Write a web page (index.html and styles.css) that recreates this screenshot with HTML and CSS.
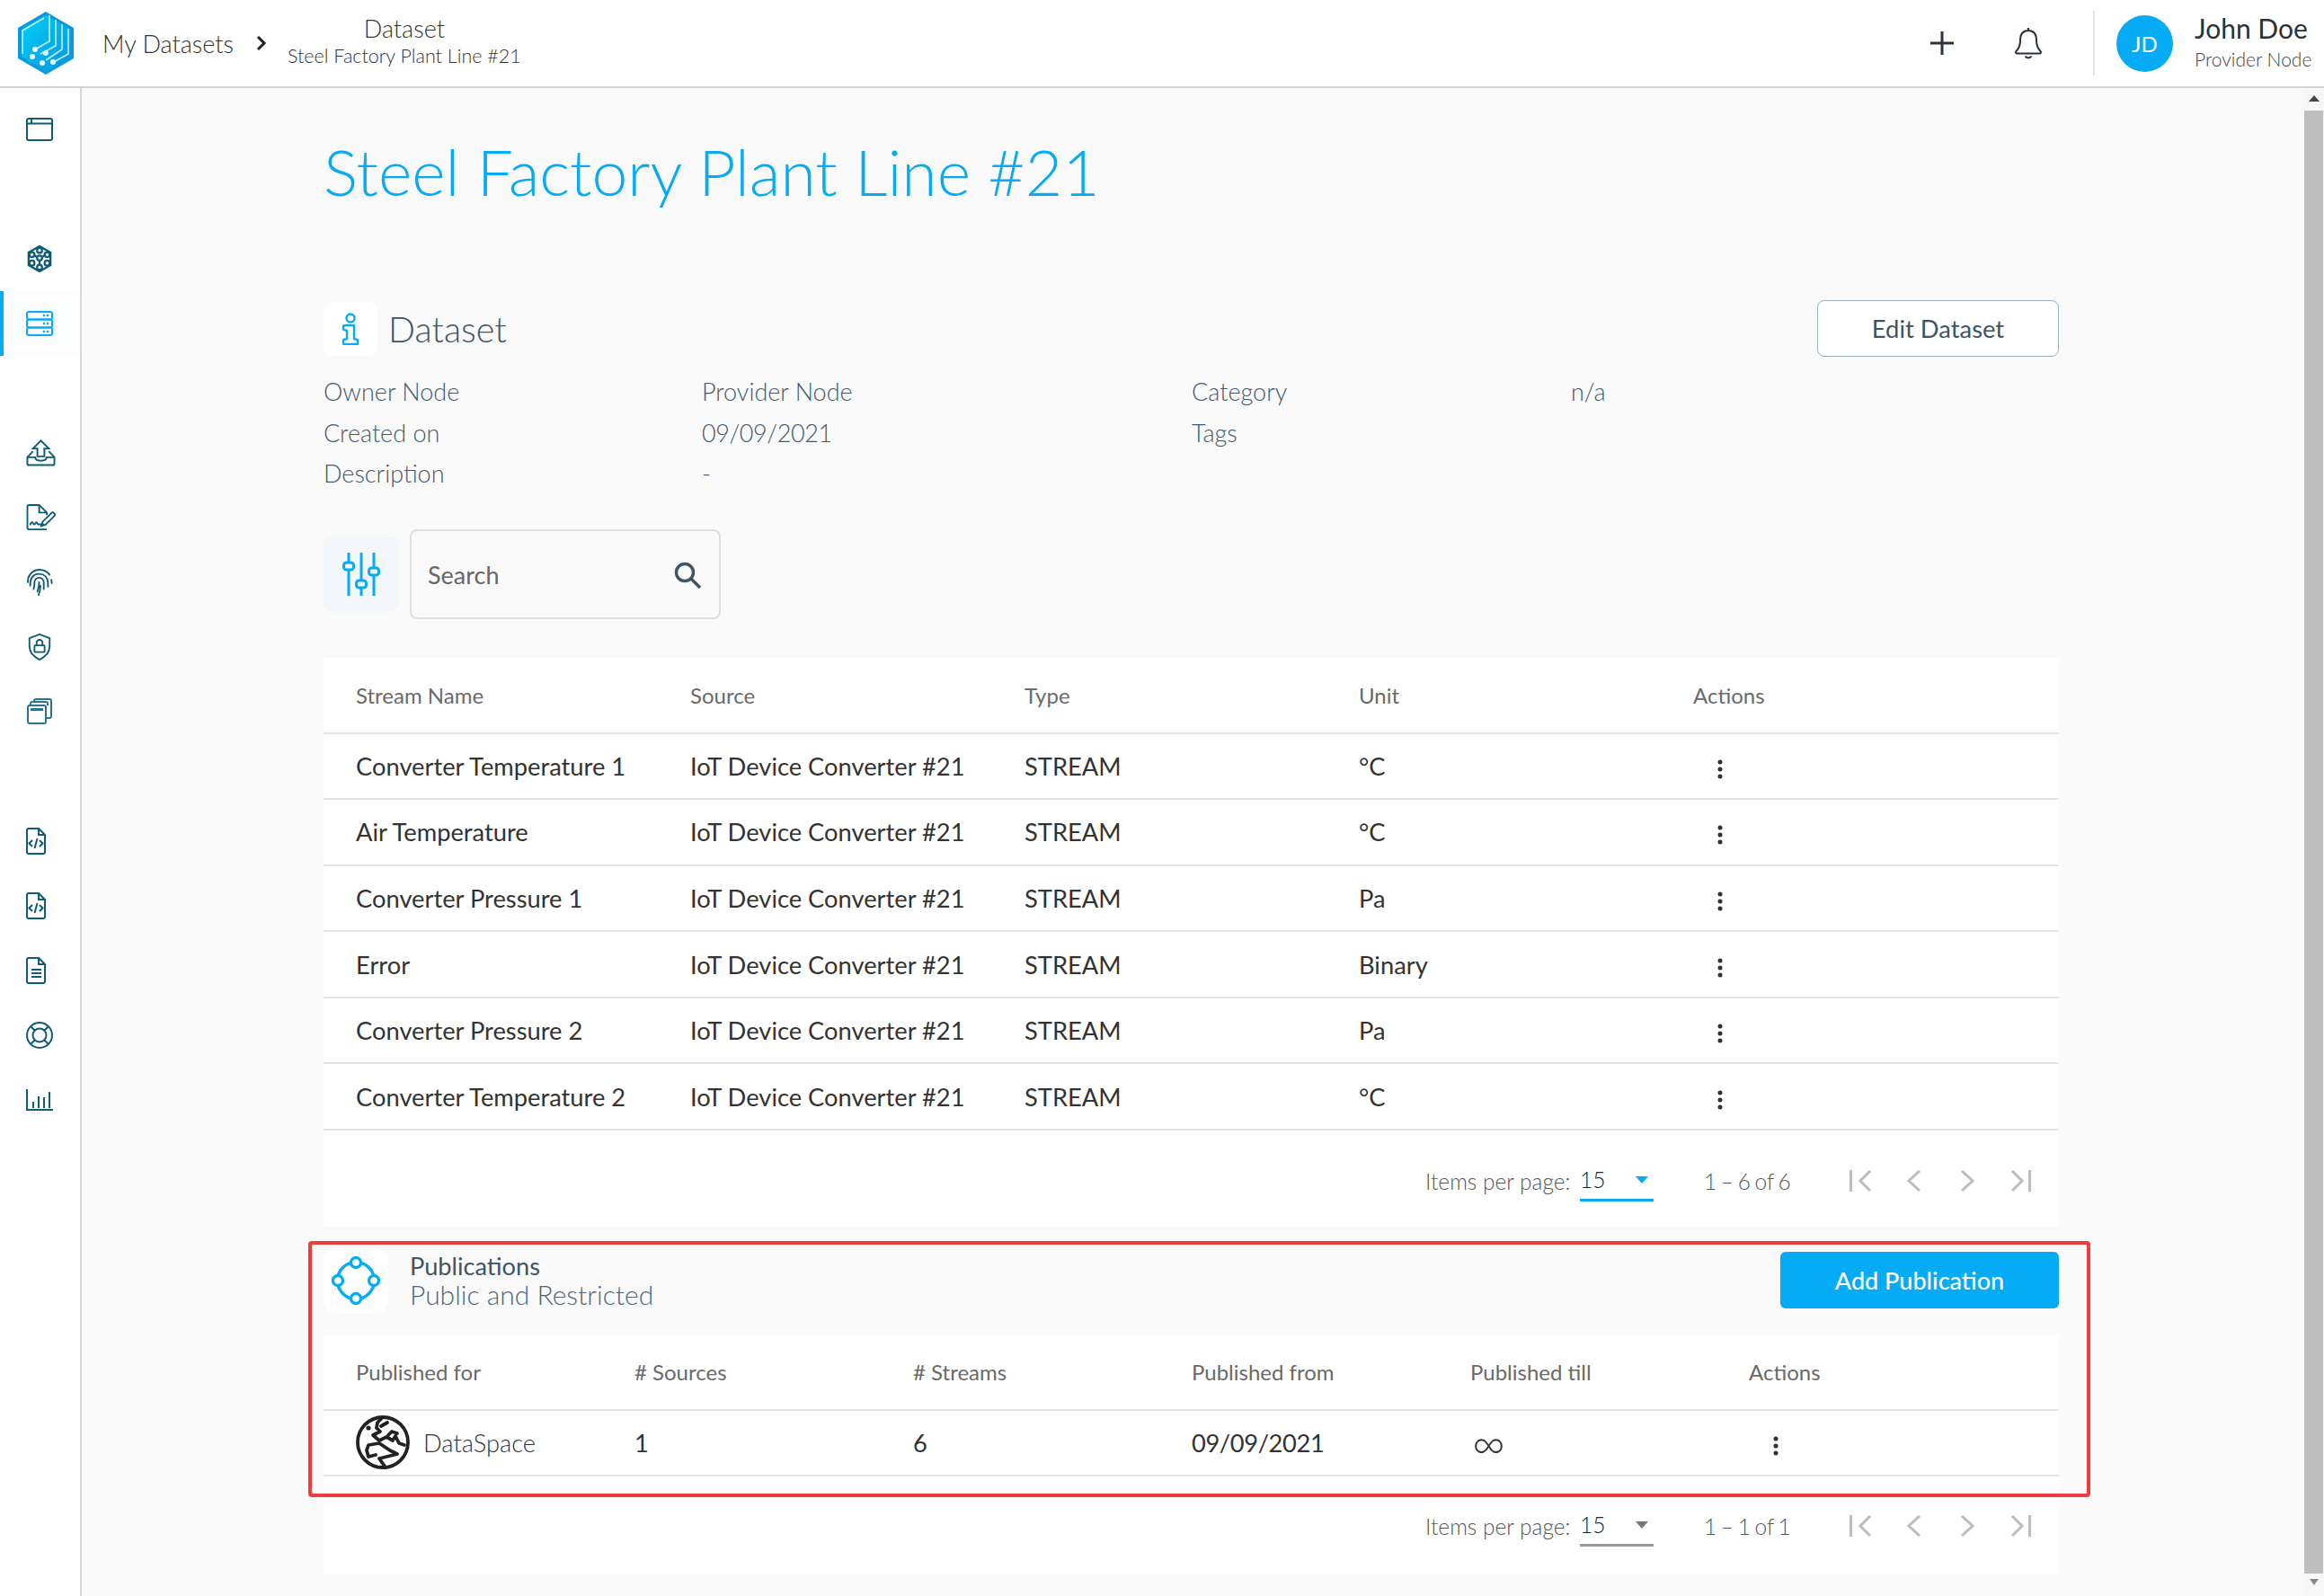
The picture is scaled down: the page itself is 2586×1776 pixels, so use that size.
FILE: index.html
```html
<!DOCTYPE html>
<html lang="en">
<head>
  <meta charset="UTF-8">
  <title>Steel Factory Plant Line #21</title>
  <link rel="stylesheet" href="styles.css">
</head>
<body>

  <header class="topbar">
    <svg class="logo" viewBox="0 0 62 70">
      <defs>
        <linearGradient id="logoFill" x1="0" y1="0" x2="1" y2="1">
          <stop offset="0" stop-color="#00d0f8"/>
          <stop offset="1" stop-color="#0a94dc"/>
        </linearGradient>
      </defs>
      <polygon points="31,0 62,18 62,52 31,70 0,52 0,18" fill="#0a9bdf"/>
      <polygon points="31,4 58,20 58,50 31,66 4,50 4,20" fill="url(#logoFill)"/>
      <g fill="none" stroke="#bdf0fb" stroke-width="1.6">
        <path d="M5 47V21L29 7"/>
        <path d="M35 4V33L19 42"/>
        <path d="M42 9V38L25 47"/>
        <path d="M49 14V42L31 54"/>
        <path d="M56 19V47L38 57"/>
      </g>
      <g fill="#e8fbff">
        <circle cx="19" cy="42" r="3"/><circle cx="31" cy="46" r="3"/>
        <circle cx="16" cy="50" r="3"/><circle cx="27" cy="57" r="3"/><circle cx="39" cy="56" r="3"/>
      </g>
    </svg>
    <span class="crumb">My Datasets</span>
    <svg class="crumb-arrow" viewBox="0 0 12 18"><path d="M2 2l7 7-7 7" fill="none" stroke="#222" stroke-width="3"/></svg>
    <div class="crumb-current">
      <div class="crumb-title">Dataset</div>
      <div class="crumb-sub">Steel Factory Plant Line #21</div>
    </div>
    <div class="topbar-right">
      <svg class="plus-icon" viewBox="0 0 28 28"><path d="M14 1v26M1 14h26" fill="none" stroke="#2b3138" stroke-width="3"/></svg>
      <svg class="bell-icon" viewBox="0 0 32 38">
        <path d="M16 2v3M16 5c-6.500 0-9 5-9 11 0 6-1.500 9-4.500 12-1 1-.5 2.500 1 2.500h25c1.500 0 2-1.500 1-2.500-3-3-4.500-6-4.500-12 0-6-2.500-11-9-11zM12.500 33.500c1.500 2.500 5.500 2.500 7 0" fill="none" stroke="#2b3138" stroke-width="2"/>
      </svg>
      <div class="topbar-sep"></div>
      <div class="avatar">JD</div>
      <div class="user">
        <div class="user-name">John Doe</div>
        <div class="user-role">Provider Node</div>
      </div>
    </div>
  </header>

  <div class="main">
    <nav class="sidebar">
      <a class="nav-item">
        <svg class="nav-icon" viewBox="0 0 30 26"><g fill="none" stroke="currentColor" stroke-width="2"><rect x="1" y="1" width="28" height="24" rx="2"/><path d="M1 6.500h28M6 1v5.500"/></g></svg>
      </a>
      <div class="nav-gap"></div>
      <a class="nav-item">
        <svg class="nav-icon" viewBox="0 0 30 32"><g fill="none" stroke="currentColor" stroke-width="2.400"><path d="M15 1l13 7.500v15L15 31 2 23.500v-15z"/><circle cx="15" cy="6" r="3"/><circle cx="6" cy="11" r="3"/><circle cx="24" cy="11" r="3"/><circle cx="6" cy="21" r="3"/><circle cx="24" cy="21" r="3"/><circle cx="15" cy="26" r="3"/><circle cx="15" cy="15" r="3"/><path d="M15 18v5M9 12l3 2M21 12l-3 2"/></g></svg>
      </a>
      <a class="nav-item active">
        <svg class="nav-icon" viewBox="0 0 30 28"><g fill="none" stroke="currentColor" stroke-width="2"><rect x="1" y="1" width="28" height="8.500" rx="2"/><rect x="1" y="9.500" width="28" height="9" rx="2"/><rect x="1" y="18.500" width="28" height="8.500" rx="2"/></g><g fill="currentColor"><circle cx="20" cy="5" r="1.300"/><circle cx="24" cy="5" r="1.300"/><circle cx="20" cy="14" r="1.300"/><circle cx="24" cy="14" r="1.300"/><circle cx="20" cy="23" r="1.300"/><circle cx="24" cy="23" r="1.300"/></g></svg>
      </a>
      <div class="nav-gap"></div>
      <a class="nav-item">
        <svg class="nav-icon wide" viewBox="0 0 34 30"><g fill="none" stroke="currentColor" stroke-width="2"><path d="M17 1L8 10h5v9h8v-9h5z"/><path d="M8 13l-6.500 7v7c0 1 1 2 2 2h27c1 0 2-1 2-2v-7L26 13M1.500 20h9c0 3 3 4 6.500 4s6.500-1 6.500-4h9"/></g></svg>
      </a>
      <a class="nav-item">
        <svg class="nav-icon wide" viewBox="0 0 34 32"><g fill="none" stroke="currentColor" stroke-width="2"><path d="M23 29v1H3a2 2 0 0 1-2-2V3a2 2 0 0 1 2-2h12l9 9v3M15 1v9h9"/><path d="M4 25c2-5 3-4 4-2s2 1 3-1 2 3 4 2h6"/><path d="M19 21l-1.500 5 5-1.500L33 14a2.500 2.500 0 0 0-3.500-3.500z"/></g></svg>
      </a>
      <a class="nav-item">
        <svg class="nav-icon" viewBox="0 0 32 32"><g fill="none" stroke="currentColor" stroke-width="2" stroke-linecap="round"><path d="M2 16C2 7 8 1 16 1c5 0 9 2 12 6M30 13c.500 1.500.500 3 .500 4"/><path d="M5 20c-.500-8 3-14 10.500-14 6 0 10 4 10.500 10v5"/><path d="M9 24c1-3 1-5 1-8 0-3 2.500-5.500 5.500-5.500S21 13 21 16v8"/><path d="M13.500 27c1-3 2-7 2-11M17 20c0 4-1 8-2 11"/></g></svg>
      </a>
      <a class="nav-item">
        <svg class="nav-icon" viewBox="0 0 28 32"><g fill="none" stroke="currentColor" stroke-width="2"><path d="M14 1l12 4.500V15c0 8-6 13-12 16C8 28 2 23 2 15V5.500z"/><rect x="8" y="14" width="12" height="8" rx="1"/><path d="M10.500 14v-3a3.500 3.500 0 0 1 7 0v3"/></g></svg>
      </a>
      <a class="nav-item">
        <svg class="nav-icon light" viewBox="0 0 28 30"><g fill="none" stroke="currentColor" stroke-width="2"><rect x="1" y="8" width="20" height="20" rx="2"/><path d="M4 12.500h14M4 12.500" stroke-width="3"/><path d="M4 8V6a2 2 0 0 1 2-2h15a2 2 0 0 1 2 2v2M8 4V3a2 2 0 0 1 2-2h15a2 2 0 0 1 2 2v17a2 2 0 0 1-2 2h-4"/></g></svg>
      </a>
      <div class="nav-gap"></div>
      <a class="nav-item">
        <svg class="nav-icon doc" viewBox="0 0 22 30"><g fill="none" stroke="currentColor" stroke-width="2"><path d="M14 1H3a2 2 0 0 0-2 2v24a2 2 0 0 0 2 2h16a2 2 0 0 0 2-2V8zM14 1v7h7"/><path d="M7 14l-3.500 3.500L7 21M15 14l3.500 3.500L15 21M12.500 12l-3 11"/></g></svg>
      </a>
      <a class="nav-item">
        <svg class="nav-icon doc" viewBox="0 0 22 30"><g fill="none" stroke="currentColor" stroke-width="2"><path d="M14 1H3a2 2 0 0 0-2 2v24a2 2 0 0 0 2 2h16a2 2 0 0 0 2-2V8zM14 1v7h7"/><path d="M7 14l-3.500 3.500L7 21M15 14l3.500 3.500L15 21M12.500 12l-3 11"/></g></svg>
      </a>
      <a class="nav-item">
        <svg class="nav-icon doc" viewBox="0 0 22 30"><g fill="none" stroke="currentColor" stroke-width="2"><path d="M14 1H3a2 2 0 0 0-2 2v24a2 2 0 0 0 2 2h16a2 2 0 0 0 2-2V8zM14 1v7h7"/><path d="M6 14h11M6 18h11M6 22h11"/></g></svg>
      </a>
      <a class="nav-item">
        <svg class="nav-icon" viewBox="0 0 30 30"><g fill="none" stroke="currentColor" stroke-width="2"><circle cx="15" cy="15" r="14"/><circle cx="15" cy="15" r="7.500"/><path d="M5 5l5 5M25 5l-5 5M5 25l5-5M25 25l-5-5"/></g></svg>
      </a>
      <a class="nav-item">
        <svg class="nav-icon" viewBox="0 0 30 24"><path d="M1 0v23h29M8 21v-7M14 21V8M20 21v-12M26 21V3" fill="none" stroke="currentColor" stroke-width="2"/></svg>
      </a>
    </nav>

    <div class="content">
      <h1 class="page-title">Steel Factory Plant Line #21</h1>

      <section class="section-head">
        <div class="icon-tile">
          <svg class="info-icon" viewBox="0 0 18 36"><g fill="none" stroke="#05abf5" stroke-width="2.400"><circle cx="9" cy="6" r="4.500"/><path d="M3 14h10v15c0 1 4 0 4 2v3c0 1-.500 1-1 1H2c-.500 0-1-.500-1-1v-3c0-2 4-1 4-2v-9c0-1-4 0-4-2v-2c0-1 1-2 2-2z"/></g></svg>
        </div>
        <h2 class="section-title">Dataset</h2>
        <button class="btn-outline">Edit Dataset</button>
      </section>

      <div class="info-grid">
        <div>Owner Node</div><div>Provider Node</div><div>Category</div><div>n/a</div>
        <div>Created on</div><div class="date">09/09/2021</div><div>Tags</div><div></div>
        <div>Description</div><div>-</div><div></div><div></div>
      </div>

      <div class="toolbar">
        <div class="filter-btn">
          <svg class="filter-icon" viewBox="0 0 42 48"><g fill="none" stroke="#05abf5" stroke-width="3"><path d="M7 0v11M7 19v29M21 0v31M21 39v9M35 0v17M35 25v23"/><rect x="1.500" y="11" width="11" height="8" rx="3"/><rect x="15.500" y="31" width="11" height="8" rx="3"/><rect x="29.500" y="17" width="11" height="8" rx="3"/></g></svg>
        </div>
        <div class="search-box">
          <span class="search-text">Search</span>
          <svg class="search-icon" viewBox="0 0 30 30"><g fill="none" stroke="#3d5567" stroke-width="3.400"><circle cx="12" cy="12" r="9.500"/><path d="M19 19l10 10"/></g></svg>
        </div>
      </div>

      <div class="card streams">
        <div class="row row-head">
          <div>Stream Name</div><div>Source</div><div>Type</div><div>Unit</div><div>Actions</div>
        </div>
        <div class="row">
          <div>Converter Temperature 1</div><div>IoT Device Converter #21</div><div>STREAM</div><div>°C</div>
          <div><svg class="kebab" viewBox="0 0 6 22"><circle cx="3" cy="3" r="2.500"/><circle cx="3" cy="11" r="2.500"/><circle cx="3" cy="19" r="2.500"/></svg></div>
        </div>
        <div class="row">
          <div>Air Temperature</div><div>IoT Device Converter #21</div><div>STREAM</div><div>°C</div>
          <div><svg class="kebab" viewBox="0 0 6 22"><circle cx="3" cy="3" r="2.500"/><circle cx="3" cy="11" r="2.500"/><circle cx="3" cy="19" r="2.500"/></svg></div>
        </div>
        <div class="row">
          <div>Converter Pressure 1</div><div>IoT Device Converter #21</div><div>STREAM</div><div>Pa</div>
          <div><svg class="kebab" viewBox="0 0 6 22"><circle cx="3" cy="3" r="2.500"/><circle cx="3" cy="11" r="2.500"/><circle cx="3" cy="19" r="2.500"/></svg></div>
        </div>
        <div class="row">
          <div>Error</div><div>IoT Device Converter #21</div><div>STREAM</div><div>Binary</div>
          <div><svg class="kebab" viewBox="0 0 6 22"><circle cx="3" cy="3" r="2.500"/><circle cx="3" cy="11" r="2.500"/><circle cx="3" cy="19" r="2.500"/></svg></div>
        </div>
        <div class="row">
          <div>Converter Pressure 2</div><div>IoT Device Converter #21</div><div>STREAM</div><div>Pa</div>
          <div><svg class="kebab" viewBox="0 0 6 22"><circle cx="3" cy="3" r="2.500"/><circle cx="3" cy="11" r="2.500"/><circle cx="3" cy="19" r="2.500"/></svg></div>
        </div>
        <div class="row">
          <div>Converter Temperature 2</div><div>IoT Device Converter #21</div><div>STREAM</div><div>°C</div>
          <div><svg class="kebab" viewBox="0 0 6 22"><circle cx="3" cy="3" r="2.500"/><circle cx="3" cy="11" r="2.500"/><circle cx="3" cy="19" r="2.500"/></svg></div>
        </div>
        <div class="paginator">
          <span class="pg-label">Items per page:</span>
          <div class="pg-select focus"><span>15</span><i class="caret"></i></div>
          <span class="pg-range">1 – 6 of 6</span>
          <svg class="pg-nav" viewBox="0 0 202 24"><g fill="none" stroke="#bdbdbd" stroke-width="3"><path d="M1.500 0v24M23 1L12 12l11 11M78 1L66 12l12 11M125 1l12 11-12 11M181 1l11 11-11 11M200.500 0v24"/></g></svg>
        </div>
      </div>

      <section class="pub-head">
        <div class="icon-tile pub-tile">
          <svg class="pub-icon" viewBox="0 0 54 54"><g fill="#fff" stroke="#05abf5" stroke-width="3.400"><circle cx="27" cy="27" r="20.500" fill="none"/><circle cx="27" cy="7" r="5.500"/><circle cx="47" cy="27" r="5.500"/><circle cx="27" cy="47" r="5.500"/><circle cx="7" cy="27" r="5.500"/></g></svg>
        </div>
        <div class="pub-text">
          <div class="pub-title">Publications</div>
          <div class="pub-sub">Public and Restricted</div>
        </div>
        <button class="btn-primary">Add Publication</button>
      </section>

      <div class="card pubs">
        <div class="row row-six row-head pub-row-head">
          <div>Published for</div><div># Sources</div><div># Streams</div><div>Published from</div><div>Published till</div><div>Actions</div>
        </div>
        <div class="row row-six">
          <div class="space-cell">
            <svg class="globe" viewBox="0 0 60 60"><g fill="none" stroke="#222" stroke-width="3.800" stroke-linejoin="round" stroke-linecap="round"><circle cx="30" cy="30" r="28"/><path d="M29 3L24 8l-1 6 4 4-8 4 7 6 8-4 7 4 3-5 4 8 6 2M35 8l-7 4M46 20l-6-2-4 4"/><path d="M12 39l2-6 12-2 12 8 8 4-12 3-8 2 7 10M12 39l2 7 8-2"/></g><circle cx="14" cy="14" r="2.600" fill="#222"/></svg>
            <span class="space-name">DataSpace</span>
          </div>
          <div>1</div><div>6</div><div class="date">09/09/2021</div><div class="infinity">∞</div>
          <div><svg class="kebab" viewBox="0 0 6 22"><circle cx="3" cy="3" r="2.500"/><circle cx="3" cy="11" r="2.500"/><circle cx="3" cy="19" r="2.500"/></svg></div>
        </div>
        <div class="paginator pub-pager">
          <span class="pg-label">Items per page:</span>
          <div class="pg-select"><span>15</span><i class="caret"></i></div>
          <span class="pg-range">1 – 1 of 1</span>
          <svg class="pg-nav" viewBox="0 0 202 24"><g fill="none" stroke="#bdbdbd" stroke-width="3"><path d="M1.500 0v24M23 1L12 12l11 11M78 1L66 12l12 11M125 1l12 11-12 11M181 1l11 11-11 11M200.500 0v24"/></g></svg>
        </div>
      </div>

      <div class="highlight"></div>
    </div>

    <div class="scrollbar">
      <i class="scroll-up"></i>
      <div class="scroll-thumb"></div>
      <i class="scroll-down"></i>
    </div>
  </div>

</body>
</html>
```

FILE: styles.css
```css
* {
  box-sizing: border-box;
}

body {
  margin: 0;
  height: 1776px;
  overflow: hidden;
  font-family: 'Lato', sans-serif;
  background: #fafafa;
  color: #2b3138;
}

/* top bar */
.topbar {
  display: flex;
  align-items: center;
  height: 98px;
  background: #ffffff;
  border-bottom: 2px solid #d4d4d4;
  padding-left: 20px;
}

.logo {
  width: 62px;
  height: 70px;
}

.crumb {
  margin-left: 32px;
  font-size: 27px;
  font-weight: 300;
  color: #333;
}

.crumb-arrow {
  width: 12px;
  height: 18px;
  margin-left: 25px;
}

.crumb-current {
  margin-left: 23px;
  text-align: center;
  font-weight: 300;
  color: #333;
}

.crumb-title {
  font-size: 27px;
  line-height: 30px;
  margin-top: -2px;
}

.crumb-sub {
  font-size: 21.500px;
  line-height: 30px;
}

.topbar-right {
  display: flex;
  align-items: center;
  margin-left: auto;
}

.plus-icon {
  width: 28px;
  height: 28px;
}

.bell-icon {
  width: 32px;
  height: 38px;
  margin-left: 66px;
}

.topbar-sep {
  width: 2px;
  height: 72px;
  background: #e2e2e2;
  margin-left: 56px;
}

.avatar {
  display: flex;
  align-items: center;
  justify-content: center;
  width: 63px;
  height: 63px;
  margin-left: 24px;
  border-radius: 50%;
  background: #05abf5;
  color: #fff;
  font-size: 24px;
}

.user {
  width: 144px;
  margin-left: 24px;
}

.user-name {
  margin-top: -4px;
  font-size: 30px;
  line-height: 38px;
}

.user-role {
  margin-top: 2px;
  font-size: 21px;
  font-weight: 300;
  line-height: 28px;
  color: #444;
}

/* layout */
.main {
  display: flex;
  height: 1678px;
}

.sidebar {
  flex: none;
  width: 91px;
  padding-top: 10px;
  background: #ffffff;
  border-right: 2px solid #d8d8d8;
}

.nav-item {
  display: flex;
  align-items: center;
  height: 72px;
  padding-left: 29px;
  color: #0f5c78;
}

.nav-gap {
  height: 72px;
}

.nav-item.active {
  background: #fbfcfe;
  border-left: 4px solid #05abf5;
  padding-left: 25px;
  color: #05abf5;
}

.nav-icon {
  width: 30px;
  height: 30px;
}

.nav-icon.wide {
  width: 33px;
}

.nav-icon.doc {
  width: 22px;
}

.nav-icon.light {
  color: #2b7490;
}

.content {
  position: relative;
  flex: none;
  width: 2472px;
  padding-left: 269px;
  padding-right: 272px;
}

.page-title {
  margin: 0;
  padding-top: 52px;
  font-size: 71.500px;
  font-weight: 300;
  line-height: 80px;
  color: #05abf5;
}

.section-head {
  display: flex;
  align-items: center;
  height: 63px;
  margin-top: 104px;
}

.icon-tile {
  display: flex;
  align-items: center;
  justify-content: center;
  width: 60px;
  height: 60px;
  background: #ffffff;
  border-radius: 10px;
}

.info-icon {
  width: 20px;
  height: 36px;
}

.section-title {
  margin: 0 0 0 12px;
  font-size: 39.500px;
  font-weight: 300;
  color: #3d5567;
}

.btn-outline {
  width: 269px;
  height: 63px;
  margin-left: auto;
  background: #fff;
  border: 1.500px solid #9fb0bd;
  border-radius: 8px;
  font-family: inherit;
  font-size: 27.400px;
  color: #3d5567;
}

.info-grid {
  display: grid;
  grid-template-columns: 421px 545px 422px 1fr;
  grid-auto-rows: 45.500px;
  align-items: center;
  margin-top: 16px;
  font-size: 27px;
  font-weight: 300;
  color: #44596b;
}

.date {
  letter-spacing: -0.400px;
}

.toolbar {
  display: flex;
  align-items: center;
  gap: 12px;
  margin-top: 39px;
}

.filter-btn {
  display: flex;
  align-items: center;
  justify-content: center;
  width: 84px;
  height: 84px;
  background: #f3f6fa;
  border-radius: 10px;
}

.filter-icon {
  width: 42px;
  height: 48px;
}

.search-box {
  display: flex;
  align-items: center;
  justify-content: space-between;
  width: 346px;
  height: 100px;
  padding: 2px 20px 0 18px;
  border: 2px solid #dedede;
  border-radius: 8px;
}

.search-text {
  font-size: 27px;
  color: #666;
}

.search-icon {
  width: 30px;
  height: 30px;
}

/* tables */
.card {
  background: #ffffff;
}

.streams {
  height: 633px;
  margin-top: 43px;
}

.row {
  display: grid;
  grid-template-columns: repeat(5, 372px);
  align-items: center;
  height: 73.600px;
  padding: 0 36px;
  border-bottom: 2px solid #e4e4e4;
  font-size: 27.300px;
  color: #333;
}

.row-six {
  grid-template-columns: repeat(6, 310px);
}

.row-head {
  height: 85px;
  font-size: 24px;
  color: #6a6a6a;
}

.kebab {
  display: block;
  width: 6px;
  height: 22px;
  margin: 7px 0 0 27px;
  fill: #2b3138;
}

.paginator {
  display: flex;
  align-items: center;
  height: 112px;
  padding-left: 1226px;
  font-size: 24.500px;
  font-weight: 300;
  color: #555;
}

.pg-label {
  flex: none;
  width: 160px;
  white-space: nowrap;
}

.pg-select {
  position: relative;
  display: flex;
  align-items: center;
  justify-content: space-between;
  flex: none;
  width: 82px;
  height: 46px;
  margin-left: 12px;
  border-bottom: 3px solid #999;
  color: #222;
}

.pg-select.focus {
  border-bottom-color: #05abf5;
}

.caret {
  width: 0;
  height: 0;
  margin-right: 6px;
  border-left: 7px solid transparent;
  border-right: 7px solid transparent;
  border-top: 8px solid #777;
}

.focus .caret {
  border-top-color: #05abf5;
}

.pg-range {
  flex: none;
  width: 162px;
  margin-left: 56px;
  word-spacing: -2px;
  white-space: nowrap;
}

.pg-nav {
  flex: none;
  width: 202px;
  height: 24px;
}

.pub-head {
  display: flex;
  align-items: center;
  height: 72px;
  margin-top: 24px;
}

.pub-tile {
  width: 72px;
  height: 72px;
  border-radius: 14px;
}

.pub-icon {
  width: 54px;
  height: 54px;
}

.pub-text {
  margin-left: 24px;
}

.pub-title {
  font-size: 27.200px;
  line-height: 30px;
  color: #3d5567;
}

.pub-sub {
  font-size: 30px;
  font-weight: 300;
  line-height: 32px;
  color: #50667a;
}

.btn-primary {
  width: 310px;
  height: 63px;
  margin-left: auto;
  background: #05abf5;
  border: none;
  border-radius: 6px;
  font-family: inherit;
  font-size: 27px;
  font-weight: 500;
  color: #fff;
}

.pubs {
  height: 267px;
  margin-top: 24px;
}

.pub-row-head {
  height: 85px;
}

.space-cell {
  display: flex;
  align-items: center;
  gap: 15px;
}

.globe {
  width: 60px;
  height: 60px;
}

.space-name {
  font-weight: 300;
}

.infinity {
  padding-left: 2px;
  font-size: 50px;
  font-weight: 300;
  line-height: 30px;
}

.pub-pager {
  height: 110px;
}

/* annotation box over the publications block */
.highlight {
  position: absolute;
  left: 252px;
  top: 1283px;
  width: 1983px;
  height: 285px;
  border: 4px solid #ef3d3d;
  border-radius: 4px;
}

/* scrollbar */
.scrollbar {
  flex: none;
  display: flex;
  flex-direction: column;
  align-items: center;
  width: 23px;
  background: #f8f8f8;
}

.scroll-up {
  margin-top: 8px;
  border-left: 6px solid transparent;
  border-right: 6px solid transparent;
  border-bottom: 7px solid #444;
}

.scroll-thumb {
  width: 21px;
  height: 1628px;
  margin-top: 10px;
  background: #bebebe;
}

.scroll-down {
  margin-top: 6px;
  border-left: 5px solid transparent;
  border-right: 5px solid transparent;
  border-top: 7px solid #888;
}
```
